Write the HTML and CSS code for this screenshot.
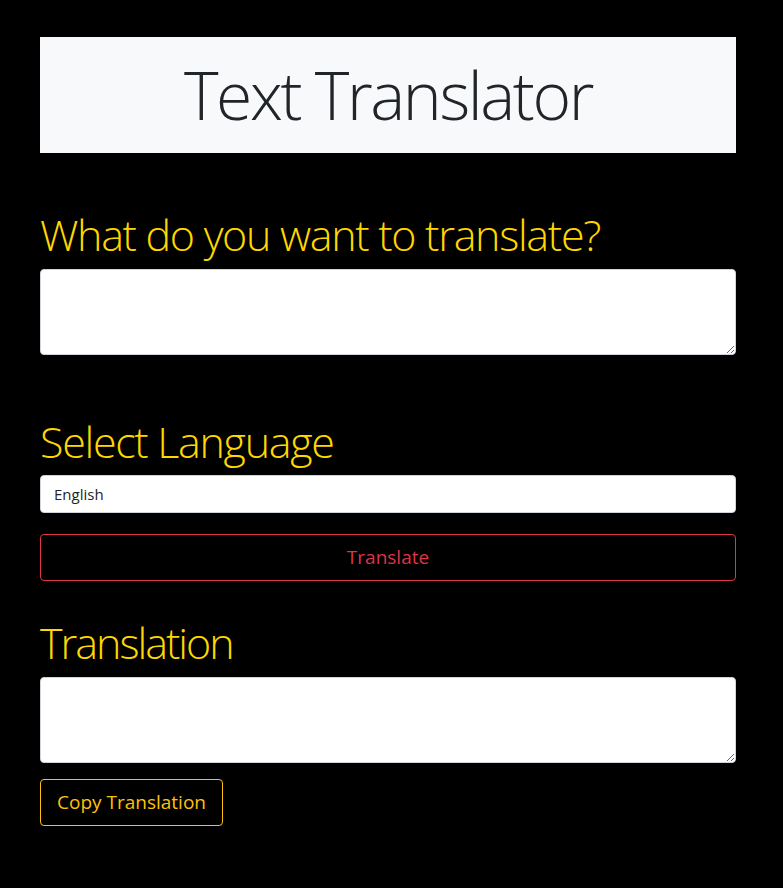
FILE: index.html
```html
<!DOCTYPE html>
<html lang="en">
<head>
<meta charset="utf-8">
<title>Text Translator</title>
<link rel="stylesheet" href="styles.css">
</head>
<body>
<main class="container">
  <header class="banner">
    <h1 class="banner-title">Text Translator</h1>
  </header>

  <section class="block block-input">
    <h2 class="label">What do you want to translate?</h2>
    <textarea class="field field-area"></textarea>
  </section>

  <section class="block block-lang">
    <h2 class="label">Select Language</h2>
    <select class="field field-select">
      <option>English</option>
    </select>
    <button class="btn btn-red" type="button">Translate</button>
  </section>

  <section class="block block-output">
    <h2 class="label label-tight">Translation</h2>
    <textarea class="field field-area"></textarea>
    <button class="btn btn-gold" type="button">Copy Translation</button>
  </section>
</main>
</body>
</html>
```

FILE: styles.css
```css
* { box-sizing: border-box; }

html, body {
  margin: 0;
  padding: 0;
  background: #000;
}

body {
  font-family: "Open Sans", "Noto Sans", sans-serif;
  color: #212529;
}

.container {
  width: 696px;
  margin-left: 40px;
  padding-top: 37px;
  display: flex;
  flex-direction: column;
}

.banner {
  height: 116px;
  background: #f8f9fa;
  display: flex;
  align-items: center;
  justify-content: center;
}

.banner-title {
  margin: 0;
  font-size: 66px;
  font-weight: 300;
  line-height: 1.2;
  letter-spacing: -2.4px;
  color: #212529;
}

.block {
  display: flex;
  flex-direction: column;
}

.block-input { margin-top: 56px; }
.block-lang { margin-top: 61px; }
.block-output { margin-top: 36px; }

.label {
  margin: 0 0 8px;
  font-size: 43px;
  font-weight: 300;
  line-height: 1.2;
  letter-spacing: -1.3px;
  color: #ffd700;
}

.label-tight { letter-spacing: -2px; }

.field {
  display: block;
  width: 100%;
  border: 1px solid #ced4da;
  border-radius: 4px;
  background: #fff;
  font-family: inherit;
  color: #212529;
}

.field-area {
  height: 86px;
  padding: 6px 12px;
  font-size: 16px;
  resize: vertical;
}

.field-select {
  height: 38px;
  padding: 0 13px;
  font-size: 15px;
  -webkit-appearance: none;
  appearance: none;
}

.btn {
  font-family: inherit;
  font-size: 19px;
  font-weight: 400;
  line-height: 1.5;
  padding: 8px 16px;
  border-radius: 4px;
  background: transparent;
  height: 47px;
}

.btn-red {
  margin-top: 21px;
  width: 100%;
  color: #dc3545;
  border: 1px solid #dc3545;
}

.btn-gold {
  margin-top: 16px;
  align-self: flex-start;
  color: #ffc107;
  border: 1px solid #ffc107;
}
```
